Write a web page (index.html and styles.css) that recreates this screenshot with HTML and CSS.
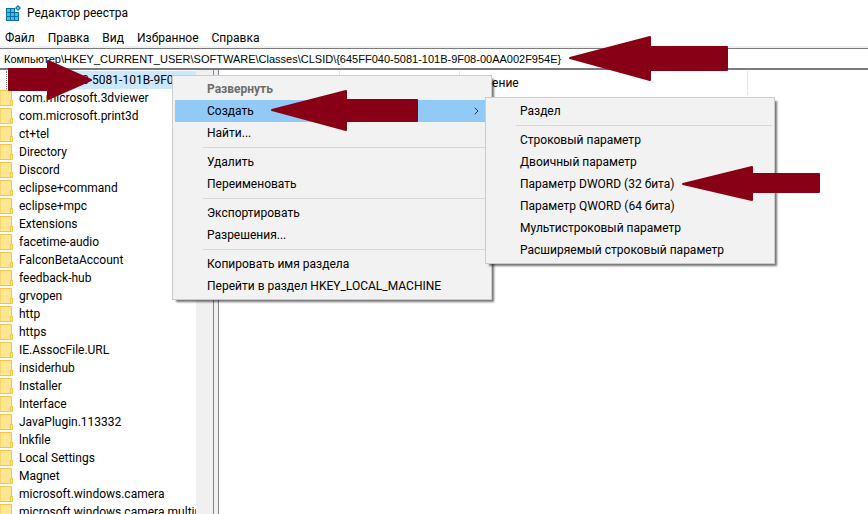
FILE: index.html
```html
<!DOCTYPE html>
<html lang="ru">
<head>
    <meta charset="UTF-8">
    <meta name="viewport" content="width=device-width, initial-scale=1.0">
    <title>Редактор реестра</title>
    <link rel="stylesheet" href="styles.css">
</head>
<body>
    <svg class="defs" aria-hidden="true">
        <symbol id="folder" viewBox="0 0 13 16">
            <path d="M0 .5H11.5V10.5H12.5V15.5H0Z" fill="#ffe692" stroke="#f0c54a"/>
            <path d="M10.5 15V10.5H12.5" fill="none" stroke="#f0c54a"/>
        </symbol>
    </svg>

    <header class="titlebar">
        <svg class="app-icon" viewBox="0 0 16 16" width="16" height="16" aria-hidden="true">
            <path d="M1 3H10V7H14V16H1Z" fill="#0b6fa4"/>
            <path d="M2 4h3v3H2zM6 4h3v3H6zM2 8h3v3H2zM6 8h3v3H6zM10 8h3v3H10zM2 12h3v3H2zM6 12h3v3H6zM10 12h3v3H10z" fill="#3fc1f0"/>
            <path d="M13 0L16 3L13 6L10 3Z" fill="#0b6fa4"/>
            <path d="M13 1.500L14.500 3L13 4.500L11.500 3Z" fill="#6fd4f7"/>
        </svg>
        <span>Редактор реестра</span>
    </header>

    <nav class="menubar">
        <button type="button">Файл</button>
        <button type="button">Правка</button>
        <button type="button">Вид</button>
        <button type="button">Избранное</button>
        <button type="button">Справка</button>
    </nav>

    <input class="address" type="text" aria-label="Путь" value="Компьютер\HKEY_CURRENT_USER\SOFTWARE\Classes\CLSID\{645FF040-5081-101B-9F08-00AA002F954E}">

    <main class="panes">
        <div class="tree">
            <ul class="tree-list">
                <li class="selected"><button type="button">{645FF040-5081-101B-9F08-00AA002F954E}</button></li>
                <li><svg class="folder"><use href="#folder"/></svg><button type="button">com.microsoft.3dviewer</button></li>
                <li><svg class="folder"><use href="#folder"/></svg><button type="button">com.microsoft.print3d</button></li>
                <li><svg class="folder"><use href="#folder"/></svg><button type="button">ct+tel</button></li>
                <li><svg class="folder"><use href="#folder"/></svg><button type="button">Directory</button></li>
                <li><svg class="folder"><use href="#folder"/></svg><button type="button">Discord</button></li>
                <li><svg class="folder"><use href="#folder"/></svg><button type="button">eclipse+command</button></li>
                <li><svg class="folder"><use href="#folder"/></svg><button type="button">eclipse+mpc</button></li>
                <li><svg class="folder"><use href="#folder"/></svg><button type="button">Extensions</button></li>
                <li><svg class="folder"><use href="#folder"/></svg><button type="button">facetime-audio</button></li>
                <li><svg class="folder"><use href="#folder"/></svg><button type="button">FalconBetaAccount</button></li>
                <li><svg class="folder"><use href="#folder"/></svg><button type="button">feedback-hub</button></li>
                <li><svg class="folder"><use href="#folder"/></svg><button type="button">grvopen</button></li>
                <li><svg class="folder"><use href="#folder"/></svg><button type="button">http</button></li>
                <li><svg class="folder"><use href="#folder"/></svg><button type="button">https</button></li>
                <li><svg class="folder"><use href="#folder"/></svg><button type="button">IE.AssocFile.URL</button></li>
                <li><svg class="folder"><use href="#folder"/></svg><button type="button">insiderhub</button></li>
                <li><svg class="folder"><use href="#folder"/></svg><button type="button">Installer</button></li>
                <li><svg class="folder"><use href="#folder"/></svg><button type="button">Interface</button></li>
                <li><svg class="folder"><use href="#folder"/></svg><button type="button">JavaPlugin.113332</button></li>
                <li><svg class="folder"><use href="#folder"/></svg><button type="button">lnkfile</button></li>
                <li><svg class="folder"><use href="#folder"/></svg><button type="button">Local Settings</button></li>
                <li><svg class="folder"><use href="#folder"/></svg><button type="button">Magnet</button></li>
                <li><svg class="folder"><use href="#folder"/></svg><button type="button">microsoft.windows.camera</button></li>
                <li><svg class="folder"><use href="#folder"/></svg><button type="button">microsoft.windows.camera.multipicker</button></li>
            </ul>
            <div class="scrollbar"></div>
        </div>
        <div class="splitter"></div>
        <div class="values">
            <div class="columns">
                <span></span>
                <span></span>
                <span>Значение</span>
            </div>
        </div>
    </main>

    <div class="menu context-menu" role="menu">
        <button type="button" role="menuitem" disabled>Развернуть</button>
        <button type="button" role="menuitem" class="active">Создать
            <svg class="chevron" viewBox="0 0 5 8" aria-hidden="true"><path d="M.7 .7L4 4L.7 7.300"/></svg>
        </button>
        <button type="button" role="menuitem">Найти...</button>
        <hr>
        <button type="button" role="menuitem">Удалить</button>
        <button type="button" role="menuitem">Переименовать</button>
        <hr>
        <button type="button" role="menuitem">Экспортировать</button>
        <button type="button" role="menuitem">Разрешения...</button>
        <hr>
        <button type="button" role="menuitem">Копировать имя раздела</button>
        <button type="button" role="menuitem">Перейти в раздел HKEY_LOCAL_MACHINE</button>
    </div>

    <div class="menu submenu" role="menu">
        <button type="button" role="menuitem">Раздел</button>
        <hr>
        <button type="button" role="menuitem">Строковый параметр</button>
        <button type="button" role="menuitem">Двоичный параметр</button>
        <button type="button" role="menuitem">Параметр DWORD (32 бита)</button>
        <button type="button" role="menuitem">Параметр QWORD (64 бита)</button>
        <button type="button" role="menuitem">Мультистроковый параметр</button>
        <button type="button" role="menuitem">Расширяемый строковый параметр</button>
    </div>

    <!-- Arrows that point out each step -->
    <svg class="arrows" width="868" height="514" viewBox="0 0 868 514" aria-hidden="true">
        <path d="M91 80L48 61V69H9V90H48V99Z"/>
        <path d="M272 110L346 91V100H417V121H346V130Z"/>
        <path d="M570 58L650 37V47H727V70H650V80Z"/>
        <path d="M683 184L752 167V174H819V192H752V200Z"/>
    </svg>
</body>
</html>
```
FILE: styles.css
```css
* {
    box-sizing: border-box;
}

body {
    display: flex;
    flex-direction: column;
    height: 100vh;
    margin: 0;
    overflow: hidden;
    background-color: #fff;
    color: #000;
    font-family: "Segoe UI", Roboto, sans-serif;
    font-size: 12px;
    line-height: 18px;
}

button, input {
    font: inherit;
    color: inherit;
}

button {
    border: none;
    padding: 0;
    background: none;
    text-align: left;
    white-space: nowrap;
}

.defs {
    position: absolute;
    width: 0;
    height: 0;
}

.titlebar {
    display: flex;
    align-items: center;
    gap: 6px;
    height: 26px;
    padding-left: 5px;
}

.menubar {
    display: flex;
    gap: 13px;
    height: 22px;
    padding: 3px 0 0 5px;
    border-bottom: 2px solid #f0f0f0;
}

.address {
    flex: none;
    width: 100%;
    height: 22px;
    padding: 0 4px;
    border: solid #7a7a7f;
    border-width: 1px 0 2px;
    border-radius: 0;
    outline: none;
    font-family: "Liberation Sans", Arial, sans-serif;
    font-size: 11px;
}

.panes {
    display: flex;
    flex: 1;
    min-height: 0;
}

/* Key tree */
.tree {
    display: flex;
    width: 213px;
}

.tree-list {
    flex: 1;
    min-width: 0;
    margin: 0;
    padding: 1px 0 0;
    overflow: hidden;
    list-style: none;
}

.tree-list li {
    display: flex;
    align-items: center;
    gap: 6px;
    height: 18px;
}

.tree-list .selected {
    margin-left: 6px;
    padding-left: 24px;
    border-left: 1px dotted #808080;
}

.selected button {
    background-color: #cce8ff;
}

.folder {
    flex: none;
    width: 13px;
    height: 16px;
}

.scrollbar {
    width: 17px;
    background-color: #f0f0f0;
}

.splitter {
    width: 6px;
    border: solid #828790;
    border-width: 0 1px;
    background-color: #f0f0f0;
}

/* Value list */
.values {
    flex: 1;
}

.columns {
    display: flex;
    padding-top: 1px;
}

.columns span {
    width: 120px;
    height: 24px;
    padding-left: 5px;
    border-right: 1px solid #e5e5e5;
    line-height: 24px;
}

.columns span:first-child {
    width: 121px;
}

.columns span:last-child {
    width: 288px;
}

/* Popup menus */
.menu {
    position: absolute;
    display: flex;
    flex-direction: column;
    padding: 2px;
    border: 1px solid #ccc;
    background-color: #f2f2f2;
    box-shadow: 3px 3px 2px -1px rgba(0, 0, 0, 0.55);
}

.menu button {
    display: flex;
    align-items: center;
    justify-content: space-between;
    height: 22px;
    padding: 0 10px 0 32px;
}

.menu button:disabled {
    color: #6d6d6d;
    font-weight: bold;
}

.menu .active {
    background-color: #91c9f7;
}

.menu hr {
    width: auto;
    height: 1px;
    margin: 3px 0 3px 28px;
    border: none;
    background-color: #d7d7d7;
}

.context-menu {
    top: 75px;
    left: 172px;
    width: 320px;
}

.submenu {
    top: 97px;
    left: 485px;
    width: 290px;
}

.chevron {
    width: 5px;
    height: 8px;
    fill: none;
    stroke: #333;
}

.arrows {
    position: absolute;
    top: 0;
    left: 0;
    fill: #880015;
    stroke: #880015;
    stroke-width: 2;
    stroke-linejoin: round;
    pointer-events: none;
}
```
